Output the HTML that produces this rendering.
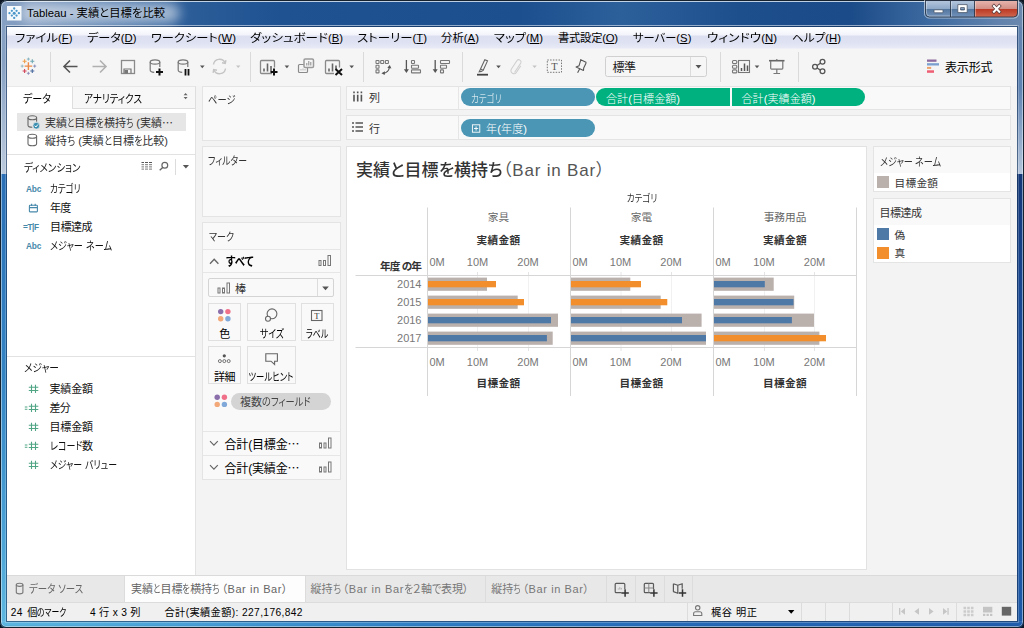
<!DOCTYPE html>
<html lang="ja"><head>
<meta charset="utf-8">
<title>Tableau - 実績と目標を比較</title>
<style>
*{box-sizing:border-box;margin:0;padding:0}
html,body{width:1024px;height:628px;overflow:hidden;background:#0c1622}
body{font-family:"Liberation Sans","Noto Sans CJK JP",sans-serif;font-size:12px;color:#333;position:relative}
.a{position:absolute}
.t{position:absolute;white-space:nowrap;line-height:16px;height:16px;font-feature-settings:"palt";transform-origin:0 50%}
i{font-style:normal;display:inline-block;transform-origin:0 50%}
.e{font-weight:inherit;font-family:"Noto Sans CJK JP",sans-serif}
u{text-decoration:underline;text-underline-offset:1px}
#win{left:0;top:0;width:1024px;height:628px;background:#15397a}
#titlebg{left:0;top:0;width:1024px;height:174px;
 background:linear-gradient(90deg,#88a2c4 0px,#7391b9 40px,#5079ab 110px,#2d5e99 180px,#1e5291 280px,#1b4f8e 520px,#2c609b 620px,#1d4f8c 740px,#1b4b88 850px,#3d6aa0 930px,#6283ad 1000px,#6c89ae 1024px)}
#titleshade{left:0;top:0;width:1024px;height:174px;background:linear-gradient(180deg,rgba(255,255,255,0) 0,rgba(255,255,255,0) 60px,rgba(255,255,255,.45) 174px)}
#tophl{left:6px;top:1px;width:1011px;height:1px;background:rgba(255,255,255,.5)}
#bothl{left:7px;top:25px;width:1010px;height:1px;background:rgba(255,255,255,.4)}
#frameL{left:0;top:174px;width:7px;height:453px;background:linear-gradient(180deg,#2a6fb6 0,#3484c4 200px,#4aa2d6 360px,#5fb8e0 453px)}
#frameR{left:1017px;top:174px;width:7px;height:454px;background:linear-gradient(180deg,#143878 0,#1b50a0 200px,#1e5aa8 454px)}
#frameRT{left:1017px;top:27px;width:7px;height:147px;background:linear-gradient(180deg,#6384b0 0,#5f83b2 60px,#b4c5db 147px)}
#frameB{left:0;top:621px;width:1024px;height:7px;background:linear-gradient(180deg,rgba(255,255,255,.12) 0,rgba(255,255,255,0) 2px,rgba(0,0,0,0) 4px,rgba(0,0,0,.12) 6px),linear-gradient(90deg,#5cb6e0 0,#48a0d6 180px,#2f7ec4 420px,#2468b6 700px,#1f5cac 1023px)}
#edge{left:0;top:0;width:1024px;height:628px;border:1px solid #16222e;border-radius:7px 7px 6px 6px;box-shadow:inset 0 0 0 1px rgba(235,248,255,.5),0 0 0 9px #0c1622}
#cborder{left:6px;top:26px;width:1012px;height:596px;border:1px solid rgba(20,50,90,.6);box-shadow:0 0 0 1px rgba(255,255,255,.22)}
#client{left:7px;top:27px;width:1010px;height:594px;background:#f5f5f5;overflow:hidden}
#menubar{left:7px;top:27px;width:1010px;height:22px;background:linear-gradient(180deg,#ffffff 0,#f3f4fb 8px,#dcdff0 9px,#dfe2f2 16px,#e8eaf6 21px,#f4f4f8 22px)}
.m{color:#000;top:30px;font-size:11.300px}
.p{font-size:12px}
.q{font-size:11px}
.card{background:#f9f9f9;border:1px solid #e4e4e4}
.btn{border:1px solid #e0e0e0;background:#f9f9f9}
.c{transform:translateX(-50%)}
.w{color:#fff;font-weight:300}
.v{font-size:10.670px;color:#333}
.g{color:#666}
.b{font-weight:bold;letter-spacing:.3px}
.n{font-size:11px;color:#777;font-family:"Liberation Sans",sans-serif}
.r{transform:translateX(-100%)}
.abc{font-size:8.300px;font-weight:bold;color:#4789aa;font-family:"Liberation Sans",sans-serif}
</style>
</head>
<body>
<div id="win" class="a">
 <div id="titlebg" class="a"></div>
 <div id="titleshade" class="a"></div>
 <div id="tophl" class="a"></div>
 <div id="bothl" class="a"></div>
 <div id="frameL" class="a"></div>
 <div id="frameR" class="a"></div>
 <div id="frameRT" class="a"></div>
 <div id="frameB" class="a"></div>
 <div id="edge" class="a"></div>
 <div id="cborder" class="a"></div>
</div>
<div id="client" class="a"></div>
<div id="menubar" class="a"></div>
<div class="t m" style="left: 15px; --w: 57.5px; letter-spacing: 0px;"><i style="transform: scaleX(1.101); margin-right: 3.94px;">ファイル</i>(<u>F</u>)</div>
<div class="t m" style="left: 87px; --w: 49.5px; letter-spacing: 0px;"><i style="transform: scaleX(1.07); margin-right: 2.22px;">データ</i>(<u>D</u>)</div>
<div class="t m" style="left: 151px; --w: 85px; letter-spacing: 0px;"><i style="transform: scaleX(1.084); margin-right: 5.19px;">ワークシート</i>(<u>W</u>)</div>
<div class="t m" style="left: 250px; --w: 93px; letter-spacing: 0px;"><i style="transform: scaleX(1.11); margin-right: 7.72px;">ダッシュボード</i>(<u>B</u>)</div>
<div class="t m" style="left: 357px; --w: 70px; letter-spacing: 0px;"><i style="transform: scaleX(1.103); margin-right: 5.19px;">ストーリー</i>(<u>T</u>)</div>
<div class="t m" style="left: 441px; --w: 38px; letter-spacing: 0.08px;">分析(<u>A</u>)</div>
<div class="t m" style="left: 494px; --w: 49px; letter-spacing: 0px;"><i style="transform: scaleX(1.09); margin-right: 2.64px;">マップ</i>(<u>M</u>)</div>
<div class="t m" style="left: 558px; --w: 60px; letter-spacing: -0.25px;">書式設定(<u>O</u>)</div>
<div class="t m" style="left: 633px; --w: 58.4px; letter-spacing: 0px;"><i style="transform: scaleX(0.996); margin-right: -0.16px;">サーバー</i>(<u>S</u>)</div>
<div class="t m" style="left: 707px; --w: 70px; letter-spacing: 0.07px;"><i style="transform: scaleX(1.12); margin-right: 5.77px;">ウィンドウ</i>(<u>N</u>)</div>
<div class="t m" style="left: 792px; --w: 49px; letter-spacing: 0px;"><i style="transform: scaleX(1.027); margin-right: 0.87px;">ヘルプ</i>(<u>H</u>)</div>
<!--MENU-->
<div class="a" id="tglow" style="left:20px;top:3px;width:160px;height:20px;border-radius:10px;background:rgba(255,255,255,.55);filter:blur(6px)"></div>
<svg class="a" style="left:7px;top:6px" width="15" height="15" viewBox="0 0 15 15"><rect x="0" y="0" width="14.500" height="14.500" fill="#f6f9fc"></rect><g fill="#4a96c8"><circle cx="7.200" cy="7.200" r="1.500"></circle><circle cx="7.200" cy="2.500" r="1.150"></circle><circle cx="7.200" cy="11.900" r="1.150"></circle><circle cx="2.500" cy="7.200" r="1.150"></circle><circle cx="11.900" cy="7.200" r="1.150"></circle><circle cx="4.850" cy="4.850" r="1.150"></circle><circle cx="9.550" cy="4.850" r="1.150"></circle><circle cx="4.850" cy="9.550" r="1.150"></circle><circle cx="9.550" cy="9.550" r="1.150"></circle></g></svg>
<div class="t" style="left: 27px; top: 5px; color: rgb(0, 0, 0); font-size: 11.3px; --w: 138px; letter-spacing: 0px;">Tableau - 実績<i style="transform: scaleX(1.008); margin-right: 0.08px;">と</i>目標<i style="transform: scaleX(1.008); margin-right: 0.09px;">を</i>比較</div>
<svg class="a" id="ctl" style="left:0;top:0" width="1024" height="30" viewBox="0 0 1024 30">
 <defs>
  <linearGradient id="gb" x1="0" y1="0" x2="0" y2="1"><stop offset="0" stop-color="#b3c5dc"></stop><stop offset=".47" stop-color="#8ea8c8"></stop><stop offset=".5" stop-color="#53769f"></stop><stop offset="1" stop-color="#7595bd"></stop></linearGradient>
  <linearGradient id="gr" x1="0" y1="0" x2="0" y2="1"><stop offset="0" stop-color="#e6b4ac"></stop><stop offset=".47" stop-color="#d38f86"></stop><stop offset=".5" stop-color="#bd3a25"></stop><stop offset="1" stop-color="#d06a52"></stop></linearGradient>
  <clipPath id="cc"><path d="M925.500 0.500h92v12.500a4 4 0 0 1-4 4h-84a4 4 0 0 1-4-4z"></path></clipPath>
 </defs>
 <path d="M924.500 0v13.500a4.500 4.500 0 0 0 4.500 4.500h85a4.500 4.500 0 0 0 4.500-4.500v-13.500" fill="none" stroke="rgba(255,255,255,.55)" stroke-width="1"></path>
 <g clip-path="url(#cc)"><rect x="925" y="1" width="49.500" height="16.500" fill="url(#gb)"></rect><rect x="974.500" y="1" width="43.500" height="16.500" fill="url(#gr)"></rect></g>
 <path d="M925.500 0.500h92v12.500a4 4 0 0 1-4 4h-84a4 4 0 0 1-4-4zM950.500 1v16M974.500 1v16" fill="none" stroke="#2a3648" stroke-opacity=".85" stroke-width="1"></path>
 <path d="M926.500 1.500v11.500a3 3 0 0 0 3 3h20.500M951.500 1.500v15M975.500 1.500v15" fill="none" stroke="rgba(255,255,255,.35)" stroke-width="1"></path>
 <rect x="934" y="9.800" width="9" height="3" rx=".8" fill="#fff" stroke="#4a5668" stroke-width=".8"></rect>
 <path d="M957.800 4.600h9.400v8h-9.400zM960.600 7.600v2.400h3.800v-2.400z" fill="#fff" fill-rule="evenodd" stroke="#4a5668" stroke-width=".8"></path>
 <path d="M993.900 6l5.400 5.800M999.300 6l-5.400 5.800" fill="none" stroke="#5a3a3a" stroke-width="3.400" stroke-linecap="square"></path><path d="M993.900 6l5.400 5.800M999.300 6l-5.400 5.800" fill="none" stroke="#fff" stroke-width="2" stroke-linecap="square"></path>
</svg>
<!--TITLE-->
<div class="a" id="toolbar" style="left:7px;top:49px;width:1010px;height:37px;background:#f5f5f5"></div>
<svg class="a" id="tbsvg" style="left:0;top:0" width="1024" height="628" viewBox="0 0 1024 628" fill="none" stroke-linecap="butt">
 <!-- separators -->
 <g stroke="#dadada" stroke-width="1">
  <path d="M50.5 52v30M250.5 52v30M363.5 52v30M462.5 52v30M720.5 52v30M798.5 52v30"></path>
 </g>
 <!-- tableau logo -->
 <g stroke-width="1.100">
  <path d="M28.400 62.300v7.600M24.600 66.100h7.600" stroke="#ec8a4a" stroke-width="1.400"></path>
  <path d="M24.600 59.200v4M22.600 61.200h4" stroke="#efa04e"></path>
  <path d="M32.300 59.200v4M30.300 61.200h4" stroke="#6fa8b4"></path>
  <path d="M24.600 69v4M22.600 71h4" stroke="#d4465a"></path>
  <path d="M32.300 69v4M30.300 71h4" stroke="#4a6a9e"></path>
  <path d="M28.400 57.600v3M26.900 59.100h3" stroke="#7fb0bc" stroke-width=".9"></path>
  <path d="M28.400 71.800v3M26.900 73.300h3" stroke="#8a8ab8" stroke-width=".9"></path>
  <path d="M22.200 64.600v3M20.700 66.100h3" stroke="#8fb2bd" stroke-width=".9"></path>
  <path d="M34.700 64.600v3M33.200 66.100h3" stroke="#7d88b8" stroke-width=".9"></path>
 </g>
 <!-- back / forward -->
 <path d="M77.5 66.5h-13M70 60.5l-6 6 6 6" stroke="#555" stroke-width="1.6"></path>
 <path d="M92.5 66.5h13M100 60.5l6 6-6 6" stroke="#b0b0b0" stroke-width="1.6"></path>
 <!-- save -->
 <rect x="121.5" y="60.500" width="13" height="13" stroke="#8a8a8a" stroke-width="1.3"></rect>
 <path d="M124 73.500v-4.500h7v4.500" stroke="#777" stroke-width="1.2"></path>
 <rect x="124.500" y="70" width="3.500" height="3.500" fill="#777" stroke="none"></rect>
 <!-- datasource + -->
 <g stroke="#777" stroke-width="1.2">
  <ellipse cx="155" cy="62" rx="4.800" ry="2.200"></ellipse>
  <path d="M150.200 62v8c0 1.300 1.500 2.200 4 2.300M159.800 62v5"></path>
 </g>
 <path d="M159.500 68.500v7M156 72h7" stroke="#111" stroke-width="2"></path>
 <!-- datasource pause -->
 <g stroke="#777" stroke-width="1.200">
  <ellipse cx="183" cy="62" rx="4.800" ry="2.200"></ellipse>
  <path d="M178.200 62v8c0 1.300 1.500 2.200 4 2.300M187.800 62v5"></path>
 </g>
 <path d="M185.500 69v6.500M188.500 69v6.500" stroke="#111" stroke-width="1.800"></path>
 <path d="M200 65.500h4.600l-2.300 2.700z" fill="#555" stroke="none"></path>
 <!-- refresh -->
 <g stroke="#c4c4c4" stroke-width="1.400">
  <path d="M213.500 64.500a6 6 0 0 1 11.500-1.500"></path>
  <path d="M225.500 68.500a6 6 0 0 1-11.500 1.500"></path>
  <path d="M222 62.800l3.300 0.600 0.600-3.300M217 70.200l-3.300-0.600-0.600 3.300"></path>
 </g>
 <path d="M236 65.500h4.400l-2.200 2.600z" fill="#c4c4c4" stroke="none"></path>
 <!-- new worksheet -->
 <path d="M272 73.500h-10.500a1 1 0 0 1-1-1v-11a1 1 0 0 1 1-1h12a1 1 0 0 1 1 1v6" stroke="#8a8a8a" stroke-width="1.300"></path>
 <path d="M264 71.500v-3M267.500 71.500v-8M271 71.500v-5.500" stroke="#666" stroke-width="1.600"></path>
 <path d="M274 68.500v7M270.500 72h7" stroke="#111" stroke-width="2"></path>
 <path d="M284.600 65.500h4.600l-2.300 2.700z" fill="#555" stroke="none"></path>
 <!-- duplicate -->
 <rect x="298.500" y="64.500" width="9" height="8" rx="1" stroke="#8a8a8a" stroke-width="1.200"></rect>
 <path d="M301 70.500v-1.500M303 70.500v-2M305 70.500v-1.500" stroke="#b5b5b5" stroke-width="1"></path>
 <rect x="304" y="59" width="9.500" height="8.500" rx="1.300" fill="#f5f5f5" stroke="#9a9a9a" stroke-width="1.500"></rect>
 <path d="M306.800 65.500v-2.500M308.800 65.500v-4.500M310.800 65.500v-3.500" stroke="#8a8a8a" stroke-width="1"></path>
 <!-- clear sheet -->
 <path d="M334 73.500h-7.500a1 1 0 0 1-1-1v-11a1 1 0 0 1 1-1h12a1 1 0 0 1 1 1v6" stroke="#8a8a8a" stroke-width="1.300"></path>
 <path d="M329 71.500v-3M332.500 71.500v-8M336 69v-3.500" stroke="#666" stroke-width="1.600"></path>
 <path d="M335.500 69l6.500 6M342 69l-6.500 6" stroke="#111" stroke-width="2"></path>
 <path d="M349.400 65.500h4.600l-2.300 2.700z" fill="#555" stroke="none"></path>
 <!-- swap -->
 <g stroke="#777" stroke-width="1.100">
  <rect x="376" y="60.500" width="3" height="3" rx=".5"></rect><rect x="380.700" y="60.500" width="3" height="3" rx=".5"></rect><rect x="385.400" y="60.500" width="3" height="3" rx=".5"></rect>
  <rect x="376" y="65.200" width="3" height="3" rx=".5"></rect><rect x="376" y="69.900" width="3" height="3" rx=".5"></rect>
 </g>
 <path d="M383.500 73.300c3.300 -.6 5.300-2.600 5.900-5.800" stroke="#555" stroke-width="1.200"></path>
 <path d="M387.300 67.800l2.500-2.800 1.600 3.400zM385 71.200l-3.600 2 3.300 1.800z" fill="#555" stroke="none"></path>
 <!-- sort asc -->
 <path d="M406.400 60v10" stroke="#555" stroke-width="1.300"></path><path d="M403.900 69.300h5l-2.500 3.600z" fill="#555" stroke="none"></path>
 <g stroke="#777" stroke-width="1.100"><rect x="411.500" y="60.500" width="3" height="3" rx=".5"></rect><rect x="411.500" y="65.200" width="7" height="3" rx=".5"></rect><rect x="411.500" y="69.900" width="9" height="3" rx=".5"></rect></g>
 <!-- sort desc -->
 <path d="M435.200 60v10" stroke="#555" stroke-width="1.300"></path><path d="M432.700 69.300h5l-2.500 3.600z" fill="#555" stroke="none"></path>
 <g stroke="#777" stroke-width="1.100"><rect x="440.500" y="60.500" width="9" height="3" rx=".5"></rect><rect x="440.500" y="65.200" width="6" height="3" rx=".5"></rect><rect x="440.500" y="69.900" width="3" height="3" rx=".5"></rect></g>
 <!-- highlighter -->
 <path d="M480.500 69l4.300-9.300 2.700 1.200-4.300 9.300zM480.500 69l-1.300 2.800 2.200-.4 1.800-1.200" stroke="#666" stroke-width="1.100"></path>
 <path d="M477 74.700h11" stroke="#444" stroke-width="1.800"></path>
 <path d="M496.200 65.500h4.600l-2.300 2.700z" fill="#555" stroke="none"></path>
 <!-- paperclip -->
 <path d="M514.500 72.500l6.300-9.500a2.300 2.300 0 0 0-3.800-2.500l-5.600 8.500a3 3 0 0 0 1 4.200a3 3 0 0 0 4.100-1l4.300-6.500" stroke="#cfcfcf" stroke-width="1.100"></path>
 <path d="M532.400 65.500h4.400l-2.200 2.600z" fill="#c4c4c4" stroke="none"></path>
 <!-- T box -->
 <rect x="547.300" y="60" width="14.200" height="12.300" stroke="#777" stroke-width="1" stroke-dasharray="1.500 1.300"></rect>
 <!-- pin -->
 <path d="M580.200 59.600l6.300 2.900M580.700 60.200l-1.600 5.500-3 1.400 7.400 3.300.2-2.300 2.400-5M579.600 69l-2 3.700" stroke="#555" stroke-width="1.100" stroke-linejoin="round"></path>
 <!-- fit dropdown -->
 <rect x="605.500" y="56.500" width="101" height="20" rx="2" fill="#f6f6f6" stroke="#d0d0d0"></rect>
 <path d="M690.500 57v19" stroke="#dcdcdc"></path>
 <path d="M695.500 65h6l-3 3.500z" fill="#555" stroke="none"></path>
 <!-- show/hide cards -->
 <g stroke="#777" stroke-width="1.100"><rect x="732.500" y="60.500" width="4.300" height="3" rx="1"></rect><rect x="732.500" y="65.200" width="4.300" height="3" rx="1"></rect><rect x="732.500" y="69.900" width="4.300" height="3" rx="1"></rect>
 <rect x="738.500" y="60.500" width="11" height="12"></rect></g>
 <path d="M741.500 71v-3M744.500 71v-7.500M747.500 71v-5.500" stroke="#555" stroke-width="1.500"></path>
 <path d="M754.700 65.500h4.600l-2.300 2.700z" fill="#555" stroke="none"></path>
 <!-- presentation -->
 <path d="M769 60.700h15.500" stroke="#666" stroke-width="1.600"></path>
 <path d="M770.700 61v7.300a.8.800 0 0 0 .8.800h10.500a.8.800 0 0 0 .8-.8v-7.300M776.800 69v4.300M773.500 73.500h6.600M776.800 59v1.500" stroke="#777" stroke-width="1.200"></path>
 <!-- share -->
 <g stroke="#555" stroke-width="1.300"><circle cx="822.500" cy="61.800" r="2.400"></circle><circle cx="815" cy="66.800" r="2.400"></circle><circle cx="822.500" cy="71.300" r="2.400"></circle><path d="M817.100 65.500l3.300-2.300M817.100 68l3.300 2.100"></path></g>
 <!-- show me -->
 <g stroke="none"><rect x="927" y="59.500" width="9.500" height="2.300" fill="#8d6b9e"></rect><rect x="927" y="63.200" width="12" height="2.300" fill="#7b9fcf"></rect><rect x="927" y="66.900" width="4.200" height="2" fill="#eda26c"></rect><rect x="927" y="70.300" width="7" height="2.500" fill="#ee5e74"></rect></g>
</svg>
<div class="t" style="left:551.200px;top:58.500px;font-family:'Liberation Serif',serif;font-size:10.500px;color:#555">T</div>
<div class="t" style="left: 612.5px; top: 59.5px; color: rgb(34, 34, 34); --w: 23.5px; letter-spacing: -0.52px;">標準</div>
<div class="t" style="left: 945px; top: 59.5px; color: rgb(0, 0, 0); --w: 47.5px; letter-spacing: -0.17px;">表示形式</div>
<!--TOOLBAR-->
<div class="a" id="mainbg" style="left:7px;top:86px;width:1010px;height:489px;background:#f3f3f3"></div>
<div class="a" id="datapane" style="left:7px;top:86px;width:189px;height:489px;background:#fff;border-right:1px solid #e3e3e3"></div>
<div class="a" style="left:72px;top:86px;width:124px;height:23px;background:#f7f7f7;border:1px solid #dedede;border-top-color:#e6e6e6"></div>
<div class="a" style="left:7px;top:86px;width:65px;height:1px;background:#e9e9e9"></div>
<div class="t p" style="left: 23px; top: 91px; color: rgb(0, 0, 0); --w: 28px; letter-spacing: 0px; font-size: 11.3px;"><i style="transform: scaleX(0.887); margin-right: -3.58px;">データ</i></div>
<div class="t p" style="left: 83.5px; top: 91px; color: rgb(0, 0, 0); --w: 58px; letter-spacing: 0px; font-size: 11.3px;"><i style="transform: scaleX(0.846); margin-right: -10.59px;">アナリティクス</i></div>
<div class="a" style="left:17px;top:113px;width:169px;height:18px;background:#e6e6e6"></div>
<div class="t q" style="left: 45px; top: 113.5px; --w: 128px; letter-spacing: 0px;">実績<i style="transform: scaleX(0.753); margin-right: -2.4px;">と</i>目標<i style="transform: scaleX(0.753); margin-right: -2.51px;">を</i>横持<i style="transform: scaleX(0.753); margin-right: -2.4px;">ち</i> (実績<b class="e">…</b></div>
<div class="t q" style="left: 45px; top: 132.5px; --w: 123px; letter-spacing: 0px;">縦持<i style="transform: scaleX(0.832); margin-right: -1.63px;">ち</i> (実績<i style="transform: scaleX(0.832); margin-right: -1.63px;">と</i>目標<i style="transform: scaleX(0.832); margin-right: -1.71px;">を</i>比較)</div>
<div class="a" style="left:7px;top:154px;width:189px;height:1px;background:#e2e2e2"></div>
<div class="t q" style="left: 23.5px; top: 159.5px; color: rgb(17, 17, 17); --w: 56.5px; letter-spacing: 0px;"><i style="transform: scaleX(0.862); margin-right: -9.02px;">ディメンション</i></div>
<div class="t abc" style="left: 26px; top: 181px; --w: 15.3px; letter-spacing: -0.19px;">Abc</div>
<div class="t q" style="left: 50px; top: 181px; color: rgb(17, 17, 17); --w: 30.5px; letter-spacing: 0px;"><i style="transform: scaleX(0.773); margin-right: -8.97px;">カテゴリ</i></div>
<div class="t q" style="left: 50px; top: 200px; color: rgb(17, 17, 17); --w: 21.3px; letter-spacing: -0.7px;">年度</div>
<div class="t abc" style="left: 23px; top: 219px; letter-spacing: -0.44px; --w: 16px;">=T|F</div>
<div class="t q" style="left: 50px; top: 219px; color: rgb(17, 17, 17); --w: 42.6px; letter-spacing: -0.47px;">目標達成</div>
<div class="t abc" style="left: 26px; top: 238px; --w: 15.3px; letter-spacing: -0.19px;">Abc</div>
<div class="t q" style="left: 50px; top: 238px; color: rgb(17, 17, 17); --w: 62px; letter-spacing: 0px;"><i style="transform: scaleX(0.83); margin-right: -6.75px;">メジャー</i> <i style="transform: scaleX(0.83); margin-right: -5.34px;">ネーム</i></div>
<div class="a" style="left:7px;top:356px;width:189px;height:1px;background:#e2e2e2"></div>
<div class="t q" style="left: 23.5px; top: 360px; color: rgb(17, 17, 17); --w: 35px; letter-spacing: 0px;"><i style="transform: scaleX(0.883); margin-right: -4.66px;">メジャー</i></div>
<div class="t q" style="left: 49.5px; top: 381px; color: rgb(17, 17, 17); --w: 43.5px; letter-spacing: -0.17px;">実績金額</div>
<div class="t q" style="left: 49.5px; top: 400px; color: rgb(17, 17, 17); --w: 21.3px; letter-spacing: -0.7px;">差分</div>
<div class="t q" style="left: 49.5px; top: 419px; color: rgb(17, 17, 17); --w: 43.5px; letter-spacing: -0.17px;">目標金額</div>
<div class="t q" style="left: 49.5px; top: 438px; color: rgb(17, 17, 17); --w: 43.5px; letter-spacing: 0px;"><i style="transform: scaleX(0.819); margin-right: -7.2px;">レコード</i>数</div>
<div class="t q" style="left: 49.5px; top: 457px; color: rgb(17, 17, 17); --w: 67.2px; letter-spacing: 0px;"><i style="transform: scaleX(0.81); margin-right: -7.54px;">メジャー</i> <i style="transform: scaleX(0.81); margin-right: -7.52px;">バリュー</i></div>
<svg class="a" id="leftsvg" style="left:0;top:0" width="1024" height="628" viewBox="0 0 1024 628" fill="none">
 <!-- tab updown -->
 <path d="M183.600 95.300l2-2.200 2 2.200zM183.600 97l2 2.200 2-2.200z" fill="#666"></path>
 <!-- datasource icons -->
 <g stroke="#666" stroke-width="1.100">
  <ellipse cx="32.300" cy="117.800" rx="4.300" ry="2"></ellipse><path d="M28 117.800v7.500c0 1.200 1.700 2 4.300 2M36.600 117.800v4"></path>
  <ellipse cx="32.300" cy="136.300" rx="4.300" ry="2"></ellipse><path d="M28 136.300v7.500c0 1.200 1.900 2 4.300 2s4.300-.8 4.300-2v-7.500"></path>
 </g>
 <circle cx="36.300" cy="125.700" r="3.400" fill="#3a8fb0" stroke="#e6e6e6" stroke-width=".8"></circle>
 <path d="M34.700 125.700l1.200 1.300 2-2.500" stroke="#fff" stroke-width="1"></path>
 <!-- grid icon -->
 <g stroke="#777" stroke-width="1">
  <path d="M141.500 162.500h2.500M145 162.500h3M149 162.500h3" stroke="#555"></path>
  <path d="M141.500 164.700h2.500M145 164.700h3M149 164.700h3M141.500 166.900h2.500M145 166.900h3M149 166.900h3M141.500 169.100h2.500M145 169.100h3M149 169.100h3"></path>
 </g>
 <!-- search -->
 <circle cx="164.800" cy="165.300" r="2.900" stroke="#666" stroke-width="1.200"></circle><path d="M162.700 167.500l-3 2.700" stroke="#666" stroke-width="1.400"></path>
 <path d="M175.500 159v16" stroke="#dcdcdc"></path>
 <path d="M182.800 165h6.200l-3.100 3.600z" fill="#555"></path>
 <!-- calendar -->
 <g stroke="#4789aa" stroke-width="1.100"><rect x="29.400" y="205.300" width="8" height="6.600" rx=".6"></rect><path d="M29.400 207.600h8M31.600 203.800v2.200M35.200 203.800v2.200"></path></g>
 <!-- # icons -->
 <g stroke="#4fa584" stroke-width="1.100">
  <path id="hash" d="M31.500 384.800v8.200M35.500 384.800v8.200M28.800 387.300h9.500M28.800 390.500h9.500"></path>
  <use href="#hash" y="19"></use><use href="#hash" y="38"></use><use href="#hash" y="57"></use><use href="#hash" y="76"></use>
  <path d="M24.800 407h2.600M24.800 409.200h2.600M24.800 445h2.600M24.800 447.200h2.600"></path>
 </g>
</svg>
<!--LEFT-->
<div class="a card" style="left:202px;top:86px;width:139px;height:55px"></div>
<div class="a card" style="left:202px;top:146px;width:139px;height:71px"></div>
<div class="a card" style="left:202px;top:222px;width:139px;height:258px"></div>
<div class="t q" style="left: 208px; top: 92px; --w: 27.5px; letter-spacing: 0px;"><i style="transform: scaleX(0.844); margin-right: -5.08px;">ページ</i></div>
<div class="t q" style="left: 208px; top: 153px; --w: 39px; letter-spacing: 0px;"><i style="transform: scaleX(0.809); margin-right: -9.2px;">フィルター</i></div>
<div class="t q" style="left: 208.5px; top: 228.5px; --w: 25px; letter-spacing: 0px;"><i style="transform: scaleX(0.818); margin-right: -5.56px;">マーク</i></div>
<div class="a" style="left:203px;top:249px;width:137px;height:1px;background:#e6e6e6"></div>
<div class="a" style="left:203px;top:272px;width:137px;height:1px;background:#e6e6e6"></div>
<div class="t p" style="left: 225.5px; top: 253.5px; color: rgb(0, 0, 0); font-weight: bold; --w: 27.5px; letter-spacing: 0px;"><i style="transform: scaleX(0.866); margin-right: -4.27px;">すべて</i></div>
<div class="a" style="left:208px;top:278px;width:126px;height:19px;border:1px solid #d4d4d4;border-radius:2px;background:#f9f9f9"></div>
<div class="a" style="left:317px;top:279px;width:1px;height:17px;background:#dcdcdc"></div>
<div class="t q" style="left: 235px; top: 280.5px; --w: 10.7px; letter-spacing: -0.3px;">棒</div>
<div class="a btn" style="left:208px;top:303px;width:33px;height:38px"></div>
<div class="a btn" style="left:247px;top:303px;width:49px;height:38px"></div>
<div class="a btn" style="left:301px;top:303px;width:33px;height:38px"></div>
<div class="a btn" style="left:208px;top:346px;width:33px;height:38px"></div>
<div class="a btn" style="left:247px;top:346px;width:49px;height:38px"></div>
<div class="t q c" style="left: 224.5px; top: 325.5px; color: rgb(0, 0, 0); --w: 10.7px; letter-spacing: -0.3px;">色</div>
<div class="t q c" style="left: 271.5px; top: 325.5px; color: rgb(0, 0, 0); --w: 24px; letter-spacing: 0px;"><i style="transform: scaleX(0.802); margin-right: -5.92px;">サイズ</i></div>
<div class="t q c" style="left: 317px; top: 325.5px; color: rgb(0, 0, 0); --w: 22.5px; letter-spacing: 0px;"><i style="transform: scaleX(0.725); margin-right: -8.52px;">ラベル</i></div>
<div class="t q c" style="left: 224.5px; top: 369px; color: rgb(0, 0, 0); --w: 21.6px; letter-spacing: -0.4px;">詳細</div>
<div class="t q c" style="left: 271px; top: 369px; color: rgb(0, 0, 0); --w: 45px; letter-spacing: 0px;"><i style="transform: scaleX(0.758); margin-right: -14.39px;">ツールヒント</i></div>
<div class="a" style="left:231px;top:392.500px;width:99.500px;height:17.500px;border-radius:9px;background:#d4d4d4"></div>
<div class="t q" style="left: 240px; top: 393.5px; color: rgb(68, 68, 68); --w: 70.5px; letter-spacing: 0px;">複数<i style="transform: scaleX(0.838); margin-right: -9.41px;">のフィールド</i></div>
<div class="a" style="left:203px;top:431px;width:137px;height:1px;background:#e6e6e6"></div>
<div class="a" style="left:203px;top:455px;width:137px;height:1px;background:#e6e6e6"></div>
<div class="t p" style="left: 224.5px; top: 436px; color: rgb(0, 0, 0); --w: 75px; letter-spacing: -0.17px;">合計(目標金<b class="e">…</b></div>
<div class="t p" style="left: 224.5px; top: 460px; color: rgb(0, 0, 0); --w: 75px; letter-spacing: -0.17px;">合計(実績金<b class="e">…</b></div>
<div class="t" style="left:314.200px;top:307.500px;font-family:'Liberation Serif',serif;font-size:8.500px;color:#333">T</div>
<svg class="a" id="midsvg" style="left:0;top:0" width="1024" height="628" viewBox="0 0 1024 628" fill="none">
 <path d="M210 263.800l4.200-4.600 4.200 4.600" stroke="#666" stroke-width="1.300"></path>
 <g id="baric" stroke="#777" stroke-width="1"><rect x="319" y="260.500" width="2" height="5"></rect><rect x="323.500" y="260.500" width="2" height="5"></rect><rect x="328" y="255.500" width="2.500" height="10"></rect></g>
 <use href="#baric" x="-101" y="27.500"></use>
 <use href="#baric" x=".500" y="182.500"></use>
 <use href="#baric" x=".500" y="206.500"></use>
 <path d="M322.200 286.500h6.600l-3.300 3.700z" fill="#555"></path>
 <g id="dots4"><circle cx="220.700" cy="311.600" r="2.700" fill="#8a6fab"></circle><circle cx="227.900" cy="311.600" r="2.700" fill="#f0708a"></circle><circle cx="220.700" cy="318.800" r="2.700" fill="#f2a878"></circle><circle cx="227.900" cy="318.800" r="2.700" fill="#80a8d8"></circle></g>
 <use href="#dots4" x="-3.500" y="85.600"></use>
 <circle cx="272" cy="313.800" r="4.900" stroke="#666" stroke-width="1.100"></circle><circle cx="268" cy="318.800" r="2.500" stroke="#666" stroke-width="1.100" fill="#f8f8f8"></circle>
 <rect x="311.500" y="310.500" width="10.500" height="10" stroke="#666" stroke-width="1.100"></rect>
 <circle cx="224.300" cy="355.800" r="1.600" fill="#555"></circle>
 <g stroke="#666" stroke-width=".9"><circle cx="219.900" cy="361.100" r="1.500"></circle><circle cx="224.300" cy="361.100" r="1.500"></circle><circle cx="228.700" cy="361.100" r="1.500"></circle></g>
 <path d="M265.800 353.800h11.600v7.400h-2.800v3.300l-3.600-3.300h-5.200z" stroke="#666" stroke-width="1.100"></path>
 <path d="M210 441.200l3.900 4 3.900-4M210 465.200l3.900 4 3.900-4" stroke="#666" stroke-width="1.200"></path>
</svg>
<!--MID-->
<div class="a card" style="left:346px;top:86px;width:665px;height:24px"></div>
<div class="a card" style="left:346px;top:115px;width:665px;height:25px"></div>
<div class="a" style="left:458px;top:87px;width:1px;height:22px;background:#e6e6e6"></div>
<div class="a" style="left:458px;top:116px;width:1px;height:23px;background:#e6e6e6"></div>
<div class="t q" style="left: 369px; top: 89.5px; --w: 10.7px; letter-spacing: -0.3px;">列</div>
<div class="t q" style="left: 369px; top: 120.5px; --w: 10.7px; letter-spacing: -0.3px;">行</div>
<div class="a" style="left:461px;top:88px;width:133.500px;height:18px;border-radius:9px;background:#4a96b4"></div>
<div class="a" style="left:596px;top:88px;width:133.500px;height:18px;border-radius:9px 0 0 9px;background:#00b180"></div>
<div class="a" style="left:731.500px;top:88px;width:133px;height:18px;border-radius:0 9px 9px 0;background:#00b180"></div>
<div class="a" style="left:461px;top:119px;width:133.500px;height:18px;border-radius:9px;background:#4a96b4"></div>
<div class="t q w" style="left: 471px; top: 90.5px; --w: 30.5px; letter-spacing: 0px;"><i style="transform: scaleX(0.773); margin-right: -8.97px;">カテゴリ</i></div>
<div class="t q w" style="left: 606px; top: 90.5px; --w: 74px; letter-spacing: 0.1px;">合計(目標金額)</div>
<div class="t q w" style="left: 741.5px; top: 90.5px; --w: 74px; letter-spacing: 0.1px;">合計(実績金額)</div>
<div class="t q w" style="left: 486px; top: 121px; --w: 41px; letter-spacing: 0.17px;">年(年度)</div>
<svg class="a" id="shsvg" style="left:0;top:0" width="1024" height="628" viewBox="0 0 1024 628" fill="none">
 <g stroke="#555" stroke-width="1.600"><path d="M354 94.800v6.800M357.700 94.800v6.800M361.400 94.800v6.800"></path><path d="M354 91.500v1.700M357.700 91.500v1.700M361.400 91.500v1.700"></path></g>
 <g stroke="#555" stroke-width="1.500"><path d="M355.500 123h7.500M355.500 127h7.500M355.500 131h7.500"></path><path d="M352 123h2M352 127h2M352 131h2"></path></g>
 <rect x="472.400" y="124.800" width="7.400" height="7.400" stroke="#fff" stroke-width=".9"></rect><path d="M474 128.500h4.200M476.100 126.400v4.200" stroke="#fff" stroke-width=".9"></path>
</svg>
<!--SHELVES-->
<div class="a" id="viz" style="left:346px;top:146px;width:521px;height:424px;background:#fff;border:1px solid #e2e2e2"></div>
<svg class="a" id="chart" style="left:0;top:0" width="1024" height="628" viewBox="0 0 1024 628">
 <g stroke="#f1f1f1" stroke-width="1"><path d="M477.500 276v71M528.500 276v71M621 276v71M671.500 276v71M764.500 276v71M814.500 276v71"></path></g>
 <g fill="#bab0ac">
  <rect x="428" y="277.600" width="59" height="13.200"></rect><rect x="428" y="295.600" width="89.700" height="13.200"></rect><rect x="428" y="313.600" width="130" height="13.200"></rect><rect x="428" y="331.600" width="124.700" height="13.200"></rect>
  <rect x="571" y="277.600" width="59.300" height="13.200"></rect><rect x="571" y="295.600" width="89.700" height="13.200"></rect><rect x="571" y="313.600" width="130.600" height="13.200"></rect><rect x="571" y="331.600" width="135" height="13.200"></rect>
  <rect x="714" y="277.600" width="59.700" height="13.200"></rect><rect x="714" y="295.600" width="80.200" height="13.200"></rect><rect x="714" y="313.600" width="100" height="13.200"></rect><rect x="714" y="331.600" width="105.400" height="13.200"></rect>
 </g>
 <g fill="#f28e2b">
  <rect x="428" y="281" width="68" height="6.300"></rect><rect x="428" y="299" width="96" height="6.300"></rect>
  <rect x="571" y="281" width="70" height="6.300"></rect><rect x="571" y="299" width="96.300" height="6.300"></rect>
  <rect x="714" y="335" width="112" height="6.300"></rect>
 </g>
 <g fill="#4e79a7">
  <rect x="428" y="317" width="123" height="6.300"></rect><rect x="428" y="335" width="118.900" height="6.300"></rect>
  <rect x="571" y="317" width="111" height="6.300"></rect><rect x="571" y="335" width="135" height="6.300"></rect>
  <rect x="714" y="281" width="50.800" height="6.300"></rect><rect x="714" y="299" width="79.500" height="6.300"></rect><rect x="714" y="317" width="77.900" height="6.300"></rect>
 </g>
 <g stroke="#d6d6d6" stroke-width="1" fill="none">
  <path d="M427.500 207.500v188.500M570.500 207.500v188.500M713.500 207.500v188.500M856.500 207.500v188.500"></path>
  <path d="M355.500 275.500h501.500M355.500 347.500h501.500"></path>
 </g>
 <g stroke="#e4e4e4" stroke-width="1"><path d="M477.500 348v3M528.500 348v3M621 348v3M671.500 348v3M764.500 348v3M814.500 348v3M477.500 272v3M528.500 272v3M621 272v3M671.500 272v3M764.500 272v3M814.500 272v3"></path></g>
</svg>
<div class="t" style="left: 356px; top: 162.2px; font-size: 17px; line-height: 18px; height: 18px; color: rgb(51, 51, 51); font-weight: 500; --w: 146.5px; letter-spacing: 0px;">実績<i style="transform: scaleX(0.974); margin-right: -0.39px;">と</i>目標<i style="transform: scaleX(0.974); margin-right: -0.41px;">を</i>横持<i style="transform: scaleX(0.974); margin-right: -0.39px;">ち</i></div>
<div class="t" style="left: 503px; top: 162.2px; font-size: 17px; line-height: 18px; height: 18px; color: rgb(85, 85, 85); --w: 101.5px; letter-spacing: 0.81px;">（Bar in Bar）</div>
<div class="t v c" style="left: 642px; top: 190px; color: rgb(51, 51, 51); --w: 30.5px; letter-spacing: 0px;"><i style="transform: scaleX(0.798); margin-right: -7.73px;">カテゴリ</i></div>
<div class="t v c g" style="left:498.500px;top:209px">家具</div>
<div class="t v c g" style="left:641.500px;top:209px">家電</div>
<div class="t v c g" style="left:785px;top:209px">事務用品</div>
<div class="t v c b" style="left: 498.5px; top: 231.5px; --w: 43.5px; letter-spacing: 0.29px;">実績金額</div>
<div class="t v c b" style="left: 641.5px; top: 231.5px; --w: 43.5px; letter-spacing: 0.29px;">実績金額</div>
<div class="t v c b" style="left: 785px; top: 231.5px; --w: 43.5px; letter-spacing: 0.29px;">実績金額</div>
<div class="t v c b" style="left: 498.5px; top: 375px; --w: 43.5px; letter-spacing: 0.29px;">目標金額</div>
<div class="t v c b" style="left: 641.5px; top: 375px; --w: 43.5px; letter-spacing: 0.29px;">目標金額</div>
<div class="t v c b" style="left: 785px; top: 375px; --w: 43.5px; letter-spacing: 0.29px;">目標金額</div>
<div class="t v b" style="left: 380px; top: 258px; --w: 42px; --nk: 1; letter-spacing: -0.86px;">年度 の年</div>
<div class="t n r" style="left:421.500px;top:275.7px">2014</div>
<div class="t n r" style="left:421.500px;top:293.7px">2015</div>
<div class="t n r" style="left:421.500px;top:311.7px">2016</div>
<div class="t n r" style="left:421.500px;top:329.7px">2017</div>
<div class="t n" style="left:429.500px;top:253.500px">0M</div><div class="t n c" style="left:477.500px;top:253.500px">10M</div><div class="t n c" style="left:528px;top:253.500px">20M</div>
<div class="t n" style="left:572.500px;top:253.500px">0M</div><div class="t n c" style="left:620.500px;top:253.500px">10M</div><div class="t n c" style="left:671px;top:253.500px">20M</div>
<div class="t n" style="left:715.500px;top:253.500px">0M</div><div class="t n c" style="left:764px;top:253.500px">10M</div><div class="t n c" style="left:814.500px;top:253.500px">20M</div>
<div class="t n" style="left:429.500px;top:353.500px">0M</div><div class="t n c" style="left:477.500px;top:353.500px">10M</div><div class="t n c" style="left:528px;top:353.500px">20M</div>
<div class="t n" style="left:572.500px;top:353.500px">0M</div><div class="t n c" style="left:620.500px;top:353.500px">10M</div><div class="t n c" style="left:671px;top:353.500px">20M</div>
<div class="t n" style="left:715.500px;top:353.500px">0M</div><div class="t n c" style="left:764px;top:353.500px">10M</div><div class="t n c" style="left:814.500px;top:353.500px">20M</div>
<!--VIZ-->
<div class="a card" style="left:873px;top:146px;width:138px;height:46px"></div>
<div class="a" style="left:874px;top:173px;width:136px;height:18px;background:#fff"></div>
<div class="a card" style="left:873px;top:198px;width:138px;height:65px"></div>
<div class="a" style="left:874px;top:225px;width:136px;height:37px;background:#fff"></div>
<div class="t q" style="left: 879.5px; top: 153.5px; --w: 62px; letter-spacing: 0px;"><i style="transform: scaleX(0.83); margin-right: -6.75px;">メジャー</i> <i style="transform: scaleX(0.83); margin-right: -5.34px;">ネーム</i></div>
<div class="t q" style="left: 879.5px; top: 205px; --w: 42.6px; letter-spacing: -0.47px;">目標達成</div>
<div class="a" style="left:876.500px;top:176px;width:12.500px;height:12px;background:#bab0ac"></div>
<div class="a" style="left:876.500px;top:228px;width:12.500px;height:12px;background:#4e79a7"></div>
<div class="a" style="left:876.500px;top:246.500px;width:12.500px;height:12px;background:#f28e2b"></div>
<div class="t v" style="left: 894.5px; top: 175px; letter-spacing: 0.29px; --w: 43.5px;">目標金額</div>
<div class="t v" style="left:894.500px;top:226.500px">偽</div>
<div class="t v" style="left:894.500px;top:245px">真</div>
<!--LEGEND-->
<div class="a" id="tabbar" style="left:7px;top:575px;width:1010px;height:27px;background:#e8e8e8;border-top:1px solid #dadada"></div>
<div class="a" id="statusbar" style="left:7px;top:602px;width:1010px;height:19px;background:#f0f0f0;border-top:1px solid #dcdcdc"></div>
<div class="a" style="left:125px;top:576px;width:180px;height:26px;background:#fdfdfd"></div>
<div class="a" style="left:124px;top:576px;width:1px;height:26px;background:#dcdcdc"></div>
<div class="a" style="left:305px;top:576px;width:1px;height:26px;background:#dcdcdc"></div>
<div class="a" style="left:485px;top:576px;width:1px;height:26px;background:#dcdcdc"></div>
<div class="a" style="left:606px;top:576px;width:1px;height:26px;background:#dcdcdc"></div>
<div class="a" style="left:635px;top:576px;width:1px;height:26px;background:#dcdcdc"></div>
<div class="a" style="left:664px;top:576px;width:1px;height:26px;background:#dcdcdc"></div>
<div class="a" style="left:692px;top:576px;width:1px;height:26px;background:#dcdcdc"></div>
<div class="t q" style="left: 28.5px; top: 581px; color: rgb(102, 102, 102); --w: 54.5px; letter-spacing: 0px;"><i style="transform: scaleX(0.857); margin-right: -4.4px;">データ</i> <i style="transform: scaleX(0.857); margin-right: -4.18px;">ソース</i></div>
<div class="t q" style="left: 131px; top: 581px; color: rgb(102, 102, 102); --w: 88.5px; letter-spacing: 0px;">実績<i style="transform: scaleX(0.761); margin-right: -2.32px;">と</i>目標<i style="transform: scaleX(0.761); margin-right: -2.43px;">を</i>横持<i style="transform: scaleX(0.761); margin-right: -2.32px;">ち</i></div><div class="t q" style="left: 221.5px; top: 581px; color: rgb(102, 102, 102); --w: 66px; letter-spacing: 0.55px;">（Bar in Bar）</div>
<div class="t q" style="left: 310.5px; top: 581px; color: rgb(119, 119, 119); --w: 30px; letter-spacing: 0px;">縦持<i style="transform: scaleX(0.824); margin-right: -1.7px;">ち</i></div><div class="t q" style="left: 342.5px; top: 581px; color: rgb(119, 119, 119); --w: 61px; letter-spacing: 0.66px;">（Bar in Bar</div><div class="t q" style="left: 403.5px; top: 581px; color: rgb(119, 119, 119); --w: 65px; letter-spacing: 0px;"><i style="transform: scaleX(0.892); margin-right: -1.1px;">を</i>２軸<i style="transform: scaleX(0.892); margin-right: -1.1px;">で</i>表現）</div>
<div class="t q" style="left: 491.2px; top: 581px; color: rgb(119, 119, 119); --w: 29.500px; letter-spacing: 0px;">縦持<i style="transform: scaleX(0.773); margin-right: -2.2px;">ち</i></div><div class="t q" style="left: 522.5px; top: 581px; color: rgb(119, 119, 119); --w: 66.500px; letter-spacing: 0.6px;">（Bar in Bar）</div>
<div class="t q" style="left: 10.8px; top: 605px; font-size: 10.2px; color: rgb(0, 0, 0); --w: 12px; letter-spacing: 0.33px;">24 </div><div class="t q" style="left: 27.3px; top: 605px; font-size: 10.2px; color: rgb(0, 0, 0); --w: 39.500px; letter-spacing: 0px;">個<i style="transform: scaleX(0.769); margin-right: -8.81px;">のマーク</i></div>
<div class="t q" style="left: 90px; top: 605px; font-size: 10.2px; color: rgb(0, 0, 0); --w: 50.5px; letter-spacing: 0.3px;">4 行 x 3 列</div>
<div class="t q" style="left: 164.5px; top: 605px; font-size: 10.2px; color: rgb(0, 0, 0); --w: 138px; letter-spacing: 0.39px;">合計(実績金額): 227,176,842</div>
<div class="t q" style="left: 711px; top: 605px; font-size: 10.2px; color: rgb(0, 0, 0); --w: 46px; letter-spacing: 0.6px;">梶谷 明正</div>
<svg class="a" id="botsvg" style="left:0;top:0" width="1024" height="628" viewBox="0 0 1024 628" fill="none">
 <g stroke="#777" stroke-width="1.100"><ellipse cx="19.600" cy="584.800" rx="3.300" ry="1.600"></ellipse><path d="M16.300 584.800v7.500c0 1 1.500 1.600 3.300 1.600s3.300-.6 3.300-1.600v-7.500"></path></g>
 <!-- new sheet -->
 <path d="M621.500 592.700h-5.300a1 1 0 0 1-1-1v-7.400a1 1 0 0 1 1-1h7.600a1 1 0 0 1 1 1v4.700" stroke="#5a5a5a" stroke-width="1.200"></path>
 <path d="M618.300 589.500v-1M619.800 589.500v-2.300M621.300 589.500v-1.600" stroke="#aaa" stroke-width="1"></path>
 <path d="M625.100 589.300v7.400M621.400 593h7.400" stroke="#333" stroke-width="1.500"></path>
 <!-- new dashboard -->
 <path d="M650.300 592.700h-5a1 1 0 0 1-1-1v-7.400a1 1 0 0 1 1-1h7.200a1 1 0 0 1 1 1v4.700" stroke="#5a5a5a" stroke-width="1.200"></path>
 <path d="M644.500 588h8.800M648.800 583.500v9" stroke="#888" stroke-width="1"></path>
 <path d="M653.900 589.300v7.400M650.200 593h7.400" stroke="#333" stroke-width="1.500"></path>
 <!-- new story -->
 <path d="M673.400 583.700l4.400 1.600 4.400-1.600v5M673.400 583.700v7.900l4.400 1.700v-8" stroke="#5a5a5a" stroke-width="1.200" stroke-linejoin="round"></path>
 <path d="M682.500 589.300v7.400M678.800 593h7.400" stroke="#333" stroke-width="1.500"></path>
 <!-- status separators -->
 <path d="M687.500 603v18M801.500 603v18M825.500 603v18M849.500 603v18M892.500 603v18M956.500 603v18" stroke="#dcdcdc"></path>
 <!-- user -->
 <g stroke="#777" stroke-width="1.100"><circle cx="697.700" cy="607.800" r="2.200"></circle><path d="M693.600 615.500v-1.800a2 2 0 0 1 2-2h4.200a2 2 0 0 1 2 2v1.800z"></path></g>
 <path d="M788 610h6.400l-3.200 3.800z" fill="#000"></path>
 <!-- nav -->
 <g fill="#c6c6c6"><path d="M899 608h1.300v6.800h-1.300zM905 608v6.800l-4.200-3.400zM919 608v6.800l-4.600-3.400zM929 608v6.800l4.600-3.400zM943 608v6.800l4.200-3.400zM947.400 608h1.300v6.800h-1.300z"></path></g>
 <g fill="#cccccc"><path d="M963.500 606.800h2.600v2.400h-2.600zM967.200 606.800h2.600v2.400h-2.600zM970.900 606.800h2.600v2.400h-2.600zM963.500 610.300h2.600v2.400h-2.600zM967.200 610.300h2.600v2.400h-2.600zM970.900 610.300h2.600v2.400h-2.600zM963.500 613.800h2.600v2.400h-2.600zM967.200 613.800h2.600v2.400h-2.600zM970.900 613.800h2.600v2.400h-2.600z"></path></g>
 <g fill="#c4c4c4"><rect x="983" y="606.800" width="9.300" height="5.700"></rect><rect x="983" y="613.800" width="2.300" height="2.200"></rect><rect x="986.500" y="613.800" width="2.300" height="2.200"></rect><rect x="990" y="613.800" width="2.300" height="2.200"></rect></g>
 <rect x="1001.800" y="606.800" width="9.400" height="8.800" fill="#666"></rect>
</svg>
<!--BOTTOM-->
















</body></html>
